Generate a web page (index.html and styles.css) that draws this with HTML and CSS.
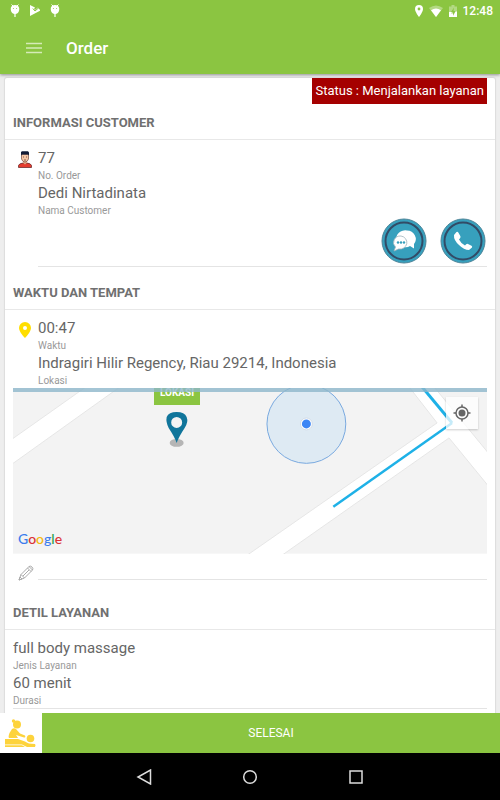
FILE: index.html
```html
<!DOCTYPE html>
<html lang="id">
<head>
    <meta charset="utf-8">
    <meta name="viewport" content="width=device-width, initial-scale=1">
    <title>Order</title>
    <link rel="stylesheet" href="styles.css">
</head>
<body>
    <header class="app-header">
        <div class="status-bar">
            <div class="notifications">
                <svg width="10" height="14" viewBox="0 0 10 14"><path d="M1.500 0.500 L3 2 M8.500 0.500 L7 2" stroke="#fff"/><path d="M0.800 4 Q1.500 1 5 1 Q8.500 1 9.200 4 V6 Q8.500 10 5 10 Q1.500 10 0.800 6Z" fill="#fff"/><path d="M5 9V13" stroke="#fff" stroke-width="1.200"/><circle cx="3.400" cy="4.500" r=".5" fill="#8bc541"/><circle cx="6.600" cy="4.500" r=".5" fill="#8bc541"/></svg>
                <svg width="10" height="14" viewBox="0 0 10 14"><path d="M0 1 L5 3.500 L4 5 L5 6 L8 3.500 L10.500 6.500 L0 12Z" fill="#fff"/><path d="M2.800 4.500 L5 7 L9 3.500" stroke="#8bc541" fill="none"/></svg>
                <svg width="10" height="14" viewBox="0 0 10 14"><path d="M1.500 0.500 L3 2 M8.500 0.500 L7 2" stroke="#fff"/><path d="M0.800 4 Q1.500 1 5 1 Q8.500 1 9.200 4 V6 Q8.500 10 5 10 Q1.500 10 0.800 6Z" fill="#fff"/><path d="M5 9V13" stroke="#fff" stroke-width="1.200"/><circle cx="3.400" cy="4.500" r=".5" fill="#8bc541"/><circle cx="6.600" cy="4.500" r=".5" fill="#8bc541"/></svg>
            </div>
            <div class="system">
                <svg width="8" height="12" viewBox="0 0 8 12"><path fill="#fff" fill-rule="evenodd" d="M4 0a4 4 0 0 0-4 4c0 3 4 8 4 8s4-5 4-8a4 4 0 0 0-4-4zm0 2.600a1.400 1.400 0 1 1 0 2.800 1.400 1.400 0 0 1 0-2.800z"/></svg>
                <svg width="14" height="12" viewBox="0 0 14 12"><path d="M0 3Q7-2 14 3L7 12Z" fill="#fff" opacity=".35"/><path d="M2 5.300Q7 1.800 12 5.300L7 12Z" fill="#fff"/></svg>
                <svg width="8" height="12" viewBox="0 0 8 12"><path d="M0 1.500H2.500V0H5.500V1.500H8V12H0Z" fill="#fff" opacity=".35"/><path d="M0 7H3L2 8.500H4V11L6.500 6.500H8V12H0Z" fill="#fff"/><path d="M5 2.500L2 7H4V10L6.500 6H4.500Z" fill="#8bc541"/></svg>
                <span>12:48</span>
            </div>
        </div>
        <div class="toolbar">
            <button class="menu-button" type="button" aria-label="Menu">
                <svg width="16" height="12" viewBox="0 0 16 12"><path d="M0 1.500H16M0 6H16M0 10.500H16" stroke="#d5ebb8" stroke-width="1.500"/></svg>
            </button>
            <h1>Order</h1>
        </div>
    </header>

    <main class="content">
        <div class="card">
            <p class="order-status">Status : Menjalankan layanan</p>

            <section>
                <h2>INFORMASI CUSTOMER</h2>
                <div class="info">
                    <svg class="info-icon" width="14" height="18" viewBox="0 0 14 18">
                        <path d="M0.500 16.500V14.500Q1 12.500 5 12H9Q13 12.500 13.500 14.500V16.500Z" fill="#e53c2e" stroke="#5d1f22" stroke-width=".7"/>
                        <path d="M5.200 9H8.800V12L7 13.500L5.200 12Z" fill="#e0a681"/>
                        <path d="M3.500 3.500H10.500V8Q9.500 11 7 11Q4.500 11 3.500 8Z" fill="#f5c6a5" stroke="#764c41" stroke-width=".7"/>
                        <path d="M3 4.500V1L4 .3H10L11 1.500V4.500L10 3.600H4Z" fill="#101a35"/>
                        <path d="M5 6H6M8 6H9M6 9H8" stroke="#633c35" stroke-width=".8"/>
                    </svg>
                    <dl class="details underlined">
                        <dd>77</dd>
                        <dt>No. Order</dt>
                        <dd>Dedi Nirtadinata</dd>
                        <dt>Nama Customer</dt>
                        <div class="contact">
                            <button type="button" aria-label="Chat">
                                <svg width="46" height="46" viewBox="0 0 46 46">
                                    <circle cx="23" cy="23" r="22" fill="#37a0bd" stroke="#4d8498" stroke-width="1"/>
                                    <circle cx="23" cy="23" r="18.500" fill="none" stroke="#324b66" stroke-width="2"/>
                                    <path d="M26 12.500a9 8.500 0 0 1 7 13.500v4.500l-4-2.500a9 8.500 0 1 1-3-15.500z" fill="#fff"/>
                                    <path d="M20 18a7 6.500 0 1 1-2.500 13l-4.500 2 1.500-4a7 6.500 0 0 1 5.500-11z" fill="#fff" stroke="#9fb4bc" stroke-width=".8"/>
                                    <g fill="#37a0bd"><circle cx="17" cy="24.500" r="1.200"/><circle cx="20" cy="24.500" r="1.200"/><circle cx="23" cy="24.500" r="1.200"/></g>
                                </svg>
                            </button>
                            <button type="button" aria-label="Telepon">
                                <svg width="46" height="46" viewBox="0 0 46 46">
                                    <circle cx="23" cy="23" r="22" fill="#37a0bd" stroke="#4d8498" stroke-width="1"/>
                                    <circle cx="23" cy="23" r="18.500" fill="none" stroke="#324b66" stroke-width="2"/>
                                    <path d="M16.500 14L14 17Q13.500 22 19 27Q24 32 29 32L32 29.500Q32.500 28.500 31.500 27.800L28 26Q27 25.500 26.200 26.300L25 27.500Q21 25.500 19 21.500L20.200 20Q20.800 19 20.300 18L18.300 14.500Q17.500 13.200 16.500 14Z" fill="#fff"/>
                                </svg>
                            </button>
                        </div>
                    </dl>
                </div>
            </section>

            <section>
                <h2>WAKTU DAN TEMPAT</h2>
                <div class="info">
                    <svg class="info-icon" width="14" height="18" viewBox="0 0 14 18"><path fill="#ffde00" fill-rule="evenodd" d="M7 1a6 6 0 0 0-6 6c0 4 6 10 6 10s6-6 6-10a6 6 0 0 0-6-6zm0 4a2 2 0 1 1 0 4 2 2 0 0 1 0-4z"/></svg>
                    <dl class="details">
                        <dd>00:47</dd>
                        <dt>Waktu</dt>
                        <dd>Indragiri Hilir Regency, Riau 29214, Indonesia</dd>
                        <dt>Lokasi</dt>
                    </dl>
                </div>
                <div class="map">
                    <svg class="map-canvas" viewBox="0 0 475 166">
                        <rect width="475" height="166" fill="#f3f3f3"/>
                        <g fill="#fff" stroke="#e6e6e6">
                            <path d="M-2 52L73 -1H107L-2 77Z"/>
                            <path d="M234 168L425 35L397 -1H422L477 66V99L437 50L269 168Z"/>
                        </g>
                        <circle cx="294" cy="36" r="39.500" fill="#deeaf3" stroke="#78a9df"/>
                        <circle cx="294" cy="36" r="6" fill="#fff" stroke="#d3dce6"/>
                        <circle cx="294" cy="36" r="4.500" fill="#3d86f5"/>
                        <path d="M410 -1L440 35" fill="none" stroke="#1eb1e7" stroke-width="3"/>
                        <path d="M440 35L321 119" fill="none" stroke="#1eb1e7" stroke-width="2.500"/>
                        <ellipse cx="164" cy="55" rx="7" ry="4" fill="#b5b5b5"/>
                        <path fill="#10759b" fill-rule="evenodd" d="M164 55Q162 49 156 40Q153 34 154 29Q156 24 164 24Q172 24 174 29Q176 34 172 40Q166 49 164 55ZM164 29a5.500 5.500 0 1 0 0 11 5.500 5.500 0 0 0 0-11z"/>
                    </svg>
                    <span class="map-label">LOKASI</span>
                    <button class="locate" type="button" aria-label="Lokasi saya">
                        <svg width="18" height="18" viewBox="0 0 18 18"><circle cx="9" cy="9" r="6" fill="none" stroke="#666" stroke-width="1.500"/><circle cx="9" cy="9" r="3.500" fill="#666"/><path d="M9 0.500V3M9 15V17.500M0.500 9H3M15 9H17.500" stroke="#666" stroke-width="1.500"/></svg>
                    </button>
                    <span class="google"><span class="blue">G</span><span class="red">o</span><span class="yellow">o</span><span class="blue">g</span><span class="green">l</span><span class="red">e</span></span>
                </div>
                <div class="note">
                    <label for="note"><svg width="16" height="16" viewBox="0 0 16 16"><g fill="none" stroke="#aaa"><path d="M1 15L3 9.500L11 1.500Q12.500 .5 14 2Q15.500 3.500 14.500 5L6.500 13Z"/><path d="M3 9.500L6.500 13M9.500 3L13 6.500M11 1.500L14.500 5M5 11L11 5M1 15L2 12L4 14Z"/></g></svg></label>
                    <input id="note" type="text" aria-label="Catatan">
                </div>
            </section>

            <section>
                <h2>DETIL LAYANAN</h2>
                <dl class="details service">
                    <dd>full body massage</dd>
                    <dt>Jenis Layanan</dt>
                    <dd>60 menit</dd>
                    <dt>Durasi</dt>
                </dl>
            </section>
        </div>
    </main>

    <footer class="action-bar">
        <svg width="42" height="40" viewBox="0 0 42 40">
            <g fill="#fdd33c">
                <circle cx="17" cy="11.500" r="4"/><circle cx="13.500" cy="8" r="1.700"/>
                <path d="M12 16Q14 14.500 16 16L20 20.500L25 22.500Q26 24.500 24 24.500L16 22L18 25H9Q8 24 9.500 20Z"/>
                <circle cx="30.500" cy="25.500" r="3.800"/>
                <path d="M5 26H18L25 28.500Q28 31 35 31Q36 32 35 34H27L22 31.500H5Z"/>
                <path d="M5 32.300H22L25 34H5Z"/>
            </g>
        </svg>
        <button type="button">SELESAI</button>
    </footer>

    <nav class="system-nav">
        <button type="button" aria-label="Kembali"><svg width="16" height="16" viewBox="0 0 16 16"><path d="M14.500 1V15L2 8Z" fill="none" stroke="#ddd" stroke-width="1.500"/></svg></button>
        <button type="button" aria-label="Beranda"><svg width="16" height="16" viewBox="0 0 16 16"><circle cx="8" cy="8" r="6.300" fill="none" stroke="#ddd" stroke-width="1.500"/></svg></button>
        <button type="button" aria-label="Aplikasi terbaru"><svg width="16" height="16" viewBox="0 0 16 16"><rect x="2" y="2" width="12" height="12" fill="none" stroke="#ddd" stroke-width="1.500"/></svg></button>
    </nav>
</body>
</html>
```

FILE: styles.css
```css
* {
    box-sizing: border-box;
}
body {
    margin: 0;
    height: 100vh;
    display: flex;
    flex-direction: column;
    font-family: Roboto, sans-serif;
    color: #666;
    background: #eee;
}
svg {
    display: block;
}
button {
    font-family: inherit;
    border: none;
    padding: 0;
    background: none;
    cursor: pointer;
}
h1, h2, p, dl, dd {
    margin: 0;
}

/* header */
.app-header {
    background: #8bc541;
    color: #fff;
    box-shadow: 0 1px 3px rgba(0, 0, 0, 0.4);
    position: relative;
}
.status-bar {
    display: flex;
    justify-content: space-between;
    align-items: center;
    height: 22px;
    padding: 0 7px 0 10px;
    font-size: 12px;
    font-weight: 500;
}
.notifications {
    display: flex;
    gap: 10px;
}
.system {
    display: flex;
    align-items: center;
    gap: 6px;
}
.toolbar {
    display: flex;
    align-items: center;
    gap: 24px;
    height: 52px;
    padding: 0 26px;
}
h1 {
    font-size: 17px;
    font-weight: 500;
}

/* order card */
.content {
    flex: 1;
    min-height: 0;
    overflow: hidden;
    padding: 4px 5px 0;
}
.card {
    background: #fff;
    border-radius: 2px;
    box-shadow: 0 0 1px 1px #dcdcdc;
    padding-bottom: 20px;
}
.order-status {
    width: fit-content;
    margin: 0 8px 0 auto;
    padding: 0 3px;
    background: #a50000;
    color: #fff;
    font-size: 13px;
    line-height: 26px;
}
h2 {
    padding: 2px 8px 0;
    border-bottom: 1px solid #e8e8e8;
    color: #707070;
    font-size: 13px;
    font-weight: 700;
    line-height: 33px;
}
.info {
    display: flex;
    gap: 6px;
    padding: 8px 8px 0 13px;
}
.info-icon {
    margin-top: 3px;
}
.details {
    flex: 1;
}
dd {
    font-size: 15px;
    line-height: 20px;
}
dt {
    color: #999;
    font-size: 10px;
    line-height: 15px;
}
.underlined {
    border-bottom: 1px solid #e4e4e4;
    margin-bottom: 7px;
}
.contact {
    display: flex;
    justify-content: flex-end;
    gap: 13px;
    padding: 0 1px 2px 0;
}

/* map */
.map {
    position: relative;
    margin: 0 8px;
    overflow: hidden;
}
.map::before {
    content: "";
    position: absolute;
    inset: 0 0 auto;
    z-index: 1;
    height: 4px;
    background: rgba(141, 183, 203, 0.8);
}
.map-canvas {
    width: 100%;
}
.map-label {
    position: absolute;
    top: -7px;
    left: 141px;
    padding: 0 6px;
    background: #8bc541;
    color: #fff;
    font-size: 10px;
    font-weight: 700;
    line-height: 24px;
}
.locate {
    position: absolute;
    top: 9px;
    right: 9px;
    display: grid;
    place-items: center;
    width: 32px;
    height: 32px;
    background: rgba(255, 255, 255, 0.75);
    box-shadow: 0 1px 2px rgba(0, 0, 0, 0.2);
}
.google {
    position: absolute;
    left: 5px;
    bottom: 6px;
    font-family: Lato, sans-serif;
    font-size: 14px;
    font-weight: 500;
    line-height: 18px;
}
.blue {
    color: #3b7ded;
}
.red {
    color: #db3236;
}
.yellow {
    color: #f4b90f;
}
.green {
    color: #2aa24c;
}
.note {
    display: flex;
    align-items: flex-end;
    gap: 4px;
    padding: 8px 8px 0 13px;
    margin-bottom: 13px;
}
.note input {
    flex: 1;
    height: 18px;
    border: none;
    border-bottom: 1px solid #e4e4e4;
    margin-bottom: 1px;
    outline: none;
}
.service {
    margin: 0 8px;
    padding-top: 8px;
    border-bottom: 1px solid #e4e4e4;
}

/* bottom bars */
.action-bar {
    display: flex;
    height: 40px;
    background: #8bc541;
}
.action-bar svg {
    background: #fff;
}
.action-bar button {
    flex: 1;
    color: #fff;
    font-size: 12px;
}
.system-nav {
    display: flex;
    justify-content: center;
    align-items: center;
    gap: 90px;
    height: 47px;
    background: #000;
}
```
